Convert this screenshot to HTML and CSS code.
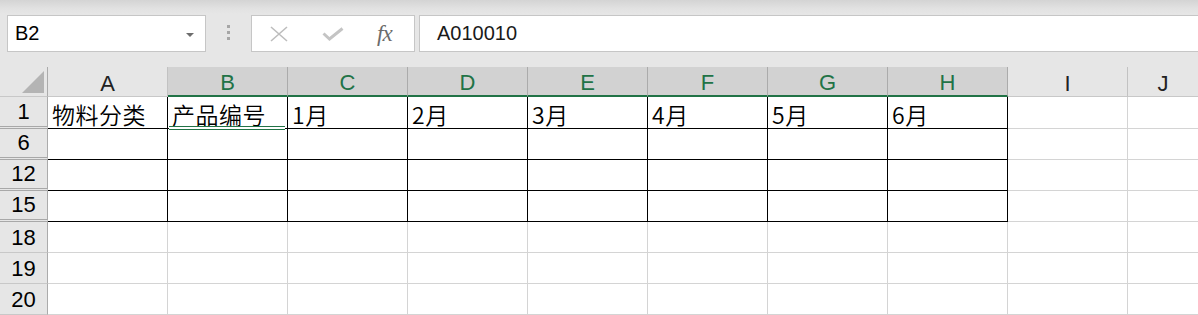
FILE: index.html
```html
<!DOCTYPE html>
<html lang="zh-CN">
<head>
    <meta charset="UTF-8">
    <title>Sheet1</title>
    <link rel="stylesheet" href="styles.css">
</head>
<body>
    <div class="toolbar">
        <div class="namebox">
            <span>B2</span>
            <span class="caret"></span>
        </div>
        <div class="grip"><i></i><i></i><i></i></div>
        <div class="fx-buttons">
            <svg class="icon-cancel" width="18" height="16" viewBox="0 0 18 16">
                <path d="M1 1 L17 15 M17 1 L1 15" />
            </svg>
            <svg class="icon-enter" width="22" height="14" viewBox="0 0 22 14">
                <path d="M1.5 6.5 L7.5 12 L20.5 1.5" />
            </svg>
            <span class="fx">fx</span>
        </div>
        <div class="formula">A010010</div>
    </div>

    <div class="sheet">
        <!-- column headers -->
        <div class="corner"><span class="tri"></span></div>
        <div class="colhead">A</div>
        <div class="colhead sel">B</div>
        <div class="colhead sel">C</div>
        <div class="colhead sel">D</div>
        <div class="colhead sel">E</div>
        <div class="colhead sel">F</div>
        <div class="colhead sel">G</div>
        <div class="colhead sel">H</div>
        <div class="colhead">I</div>
        <div class="colhead last">J</div>

        <!-- row 1 -->
        <div class="rowhead hidden-after">1</div>
        <div class="cell t">物料分类</div>
        <div class="cell t active">产品编号</div>
        <div class="cell t">1月</div>
        <div class="cell t">2月</div>
        <div class="cell t">3月</div>
        <div class="cell t">4月</div>
        <div class="cell t">5月</div>
        <div class="cell t">6月</div>
        <div class="cell"></div>
        <div class="cell last"></div>

        <!-- row 6 -->
        <div class="rowhead hidden-after">6</div>
        <div class="cell t"></div>
        <div class="cell t"></div>
        <div class="cell t"></div>
        <div class="cell t"></div>
        <div class="cell t"></div>
        <div class="cell t"></div>
        <div class="cell t"></div>
        <div class="cell t"></div>
        <div class="cell"></div>
        <div class="cell last"></div>

        <!-- row 12 -->
        <div class="rowhead hidden-after">12</div>
        <div class="cell t"></div>
        <div class="cell t"></div>
        <div class="cell t"></div>
        <div class="cell t"></div>
        <div class="cell t"></div>
        <div class="cell t"></div>
        <div class="cell t"></div>
        <div class="cell t"></div>
        <div class="cell"></div>
        <div class="cell last"></div>

        <!-- row 15 -->
        <div class="rowhead hidden-after">15</div>
        <div class="cell t"></div>
        <div class="cell t"></div>
        <div class="cell t"></div>
        <div class="cell t"></div>
        <div class="cell t"></div>
        <div class="cell t"></div>
        <div class="cell t"></div>
        <div class="cell t"></div>
        <div class="cell"></div>
        <div class="cell last"></div>

        <!-- row 18 -->
        <div class="rowhead">18</div>
        <div class="cell"></div>
        <div class="cell"></div>
        <div class="cell"></div>
        <div class="cell"></div>
        <div class="cell"></div>
        <div class="cell"></div>
        <div class="cell"></div>
        <div class="cell"></div>
        <div class="cell"></div>
        <div class="cell last"></div>

        <!-- row 19 -->
        <div class="rowhead">19</div>
        <div class="cell"></div>
        <div class="cell"></div>
        <div class="cell"></div>
        <div class="cell"></div>
        <div class="cell"></div>
        <div class="cell"></div>
        <div class="cell"></div>
        <div class="cell"></div>
        <div class="cell"></div>
        <div class="cell last"></div>

        <!-- row 20 -->
        <div class="rowhead">20</div>
        <div class="cell"></div>
        <div class="cell"></div>
        <div class="cell"></div>
        <div class="cell"></div>
        <div class="cell"></div>
        <div class="cell"></div>
        <div class="cell"></div>
        <div class="cell"></div>
        <div class="cell"></div>
        <div class="cell last"></div>
    </div>
</body>
</html>
```

FILE: styles.css
```css
* {
    box-sizing: border-box;
}
html, body {
    margin: 0;
    padding: 0;
    overflow: hidden;
}
body {
    width: 1198px;
    height: 315px;
    background: #ffffff;
    font-family: "Liberation Sans", "Noto Sans CJK SC", sans-serif;
    color: #000;
}

/* formula bar */
.toolbar {
    height: 67px;
    display: flex;
    align-items: flex-start;
    padding: 15px 0 0 7px;
    background: linear-gradient(#d4d4d4 0px, #e2e2e2 9px, #e6e6e6 14px);
    overflow: hidden;
}
.namebox {
    width: 199px;
    height: 37px;
    flex: none;
    display: flex;
    align-items: center;
    justify-content: space-between;
    padding: 0 11px 0 7px;
    background: #fff;
    border: 1px solid #c6c6c6;
    font-size: 20px;
}
.caret {
    width: 0;
    height: 0;
    border-left: 4px solid transparent;
    border-right: 4px solid transparent;
    border-top: 4px solid #6d6d6d;
    margin-top: 2px;
}
.grip {
    flex: none;
    display: flex;
    flex-direction: column;
    gap: 3px;
    margin: 10px 21px 0 21px;
}
.grip i {
    display: block;
    width: 3px;
    height: 3px;
    background: #a6a6a6;
}
.fx-buttons {
    width: 164px;
    height: 37px;
    flex: none;
    display: flex;
    align-items: center;
    padding-left: 18px;
    background: #fff;
    border: 1px solid #c6c6c6;
}
.icon-cancel path {
    fill: none;
    stroke: #bdbdbd;
    stroke-width: 1.6;
}
.icon-enter {
    margin-left: 34px;
}
.icon-enter path {
    fill: none;
    stroke: #c4c4c4;
    stroke-width: 3;
}
.fx {
    margin-left: 33px;
    font-family: "Liberation Serif", serif;
    font-style: italic;
    font-size: 23px;
    color: #6b6b6b;
    letter-spacing: -1px;
}
.formula {
    flex: 1;
    height: 37px;
    margin: 0 -20px 0 4px;
    display: flex;
    align-items: center;
    padding-left: 17px;
    background: #fff;
    border: 1px solid #c6c6c6;
    font-size: 20px;
    color: #1a1a1a;
}

/* grid */
.sheet {
    display: grid;
    grid-template-columns: 48px repeat(9, 120px) 1fr;
    grid-template-rows: 30px 32px repeat(6, 31px);
}
.corner,
.colhead {
    background: #e6e6e6;
    border-right: 1px solid #c2c2c2;
    border-bottom: 1px solid #c8c8c8;
}
.corner {
    display: flex;
    justify-content: flex-end;
    align-items: flex-end;
    padding: 0 3px 3px 0;
    border-right-color: #ababab;
}
.tri {
    width: 0;
    height: 0;
    border-left: 22px solid transparent;
    border-bottom: 22px solid #b4b4b4;
}
.colhead {
    display: flex;
    align-items: center;
    justify-content: center;
    padding-top: 4px;
    font-size: 22px;
    color: #222;
}
.colhead.sel {
    background: #d2d2d2;
    color: #217346;
    border-right-color: #ababab;
    border-bottom: 2px solid #217346;
}
.colhead.last,
.cell.last {
    border-right: none;
}
.rowhead {
    display: flex;
    align-items: flex-end;
    justify-content: center;
    background: #e6e6e6;
    border-right: 1px solid #ababab;
    border-bottom: 1px solid #c8c8c8;
    font-size: 22px;
    line-height: 28px;
}
.rowhead.hidden-after {
    border-bottom: 3px double #a8a8a8;
}
.cell {
    position: relative;
    display: flex;
    align-items: flex-end;
    padding: 0 0 0 4px;
    border-right: 1px solid #d4d4d4;
    border-bottom: 1px solid #d4d4d4;
    font-family: "Noto Sans CJK SC", "Liberation Sans", sans-serif;
    font-size: 23px;
    font-weight: 350;
    line-height: 28px;
    letter-spacing: 0.5px;
    white-space: nowrap;
}
.cell.t {
    border-right-color: #000;
    border-bottom-color: #000;
}
/* active cell B2 sits in the hidden rows, drawn as a collapsed double line */
.cell.active::before,
.cell.active::after {
    content: "";
    position: absolute;
    left: 1px;
    right: 2px;
    height: 1px;
    background: #217346;
    z-index: 2;
}
.cell.active::before {
    bottom: 1px;
}
.cell.active::after {
    bottom: -2px;
    height: 2px;
    background: #fff;
    border-bottom: 1px solid #217346;
    box-sizing: content-box;
}
```
